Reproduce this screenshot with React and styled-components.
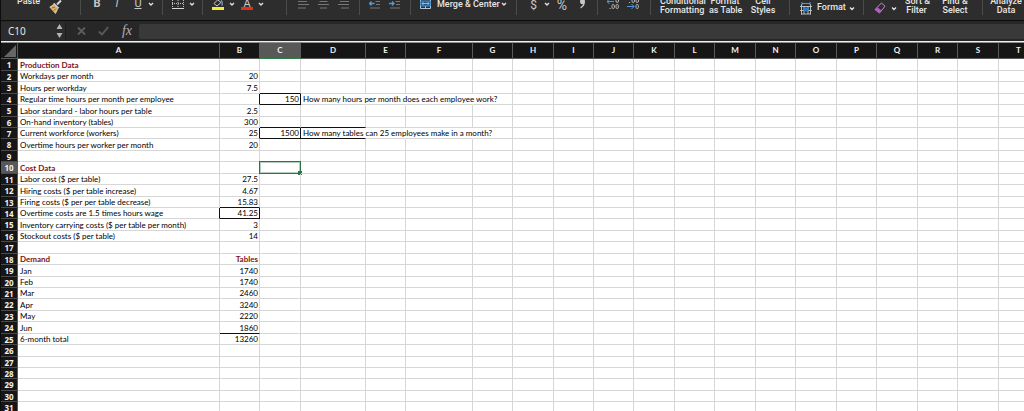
import React from 'react'
import styled, { createGlobalStyle } from 'styled-components'

const GlobalStyle = createGlobalStyle`
  * {
    box-sizing: border-box;
  }

  body {
    margin: 0;
    background: #fff;
  }

  button,
  input {
    margin: 0;
    padding: 0;
    border: 0;
    background: none;
    color: inherit;
    font: inherit;
  }
`

const Page = styled.div`
  display: flex;
  flex-direction: column;
  height: 100vh;
  overflow: hidden;
  border-left: 1px solid #0c0c0c;
  color: #e6e6e6;
  font-family: Roboto, "Liberation Sans", sans-serif;
`

const Ribbon = styled.div`
  flex: none;
  display: grid;
  grid-template-columns: 80px 82px 40px 84px 73px 51px 106px 81px 53px 139px 74px 119px 1fr;
  height: 21px;
  overflow: hidden;
  background: #2d2d2d;
  border-bottom: 1px solid #0d0d0d;
  font-size: 9px;
  font-weight: 500;
`

const Group = styled.div`
  display: flex;
  align-items: flex-end;
  gap: ${p => p.$gap || 8}px;
  height: 15px;
  padding-left: ${p => p.$left || 9}px;
  border-right: 1px solid #4b4b4b;

  &:last-child {
    border-right: 0;
  }
`

const Split = styled.div`
  display: flex;
  align-items: flex-end;
  gap: ${p => p.$gap || 5}px;
`

const Tool = styled.button`
  flex: none;
  display: block;
  width: ${p => p.$width || 12}px;
  height: 15px;

  svg {
    display: block;
  }
`

const Glyph = styled.button`
  flex: none;
  width: ${p => p.$width || 8}px;
  height: 15px;
  padding-bottom: ${p => (p.$low ? 5 : 7)}px;
  color: #c8c8c8;
  font-size: ${p => p.$size || 11}px;
  font-weight: ${p => (p.$bold ? 700 : 400)};
  font-style: ${p => (p.$italic ? 'italic' : 'normal')};
  text-decoration: ${p => (p.$underline ? 'underline' : 'none')};
  line-height: 8px;
`

const FontColor = styled.button`
  flex: none;
  width: 12px;
  height: 10px;
  margin-bottom: 5px;
  border-bottom: 3px solid #e0301e;
  color: #c8c8c8;
  font-size: 11px;
  font-weight: 400;
  line-height: 7px;
`

const TextButton = styled.button`
  flex: none;
  height: 15px;
  padding-bottom: ${p => (p.$low ? 2 : 7)}px;
  line-height: 8px;
  white-space: nowrap;
`

const TwoLine = styled.button`
  flex: none;
  width: ${p => p.$width}px;
  height: 18px;
  line-height: 9px;
  text-align: center;
  white-space: pre;
`

const FormulaBar = styled.div`
  flex: none;
  display: flex;
  align-items: center;
  height: 21px;
  background: #272727;
  border-bottom: 1px solid #eef0ef;
`

const NameBox = styled.div`
  display: flex;
  align-items: center;
  width: 65px;
  height: 18px;
  padding-left: 7px;
  background: #2c2c2c;
  border-right: 1px solid #1d1d1d;

  input {
    width: 48px;
    height: 14px;
    font-size: 10px;
    font-family: "Noto Sans", sans-serif;
  }
`

const BarActions = styled.div`
  display: flex;
  align-items: center;
  gap: 12px;
  padding: 0 6px 0 11px;
`

const FxButton = styled.button`
  width: 12px;
  color: #b0b0b0;
  font-family: "Liberation Serif", serif;
  font-size: 14px;
  font-style: italic;
  line-height: 14px;
`

const FormulaInput = styled.input`
  flex: 1;
  min-width: 0;
  height: 15px;
  padding: 0 4px;
  background: #393939;
  border-radius: 2px 0 0 2px;
  font-size: 10px;
`

const Sheet = styled.div`
  flex: 1;
  min-height: 0;
  overflow: hidden;
  background: #fff;
`

const Grid = styled.table`
  width: ${p => p.$width}px;
  table-layout: fixed;
  border-collapse: separate;
  border-spacing: 0;
  font-family: Lato, sans-serif;
  font-size: 8px;
  line-height: 9px;

  th,
  td {
    padding: 0;
    vertical-align: middle;
    white-space: nowrap;
  }

  tbody tr {
    height: 11px;
  }

  tbody tr:nth-child(7n + 1),
  tbody tr:nth-child(7n + 3),
  tbody tr:nth-child(7n + 5) {
    height: 12px;
  }
`

const ColHead = styled.th`
  height: 17px;
  background: ${p => (p.$active ? '#585858' : '#161616')};
  border-top: 1px solid #8b8f8d;
  border-right: 1px solid #5a5a5a;
  border-bottom: 1px solid ${p => (p.$active ? '#2f7d46' : '#5a5a5a')};
  color: #f2f2f2;
  font-weight: 700;

  svg {
    display: block;
    margin-left: 3px;
  }
`

const RowHead = styled.th`
  background: ${p => (p.$active ? '#585858' : '#161616')};
  border-right: 1px solid #5a5a5a;
  border-bottom: 1px solid #4a4a4a;
  color: #f2f2f2;
  font-family: "Noto Sans", sans-serif;
  font-weight: 700;
`

const lineColor = (edges, side) => (edges.includes(side) ? '#111' : '#d6d6d6')

const Cell = styled.td`
  position: relative;
  border-right: 1px solid ${p => (p.$spill ? 'transparent' : lineColor(p.$edges, 'r'))};
  border-bottom: 1px solid ${p => lineColor(p.$edges, 'b')};
  color: ${p => (p.$heading ? '#7d1416' : '#000')};
  font-weight: ${p => (p.$heading ? 700 : 400)};
  text-align: ${p => (p.$right ? 'right' : 'left')};

  && {
    padding: 1px 1px 0 2px;
  }
`

const Selection = styled.div`
  position: absolute;
  inset: -1px;
  border: 1px solid #2f7543;
  outline: 1px solid rgba(47, 117, 67, 0.35);
  outline-offset: -2px;

  &::after {
    content: "";
    position: absolute;
    right: -2px;
    bottom: -2px;
    width: 4px;
    height: 4px;
    background: #2f7543;
  }
`

const columns = [
  ['A', 202], ['B', 40], ['C', 41], ['D', 65], ['E', 40], ['F', 67], ['G', 40],
  ['H', 41], ['I', 40], ['J', 40], ['K', 41], ['L', 40], ['M', 41], ['N', 40],
  ['O', 41], ['P', 40], ['Q', 41], ['R', 40], ['S', 41], ['T', 40], ['U', 41],
  ['V', 40], ['W', 41], ['X', 40], ['Y', 41], ['Z', 40],
]
const rowHeadWidth = 17
const gridWidth = columns.reduce((sum, [, width]) => sum + width, rowHeadWidth)
const rows = Array.from({ length: 50 }, (_, i) => i + 1)

const cells = {
  A1: 'Production Data',
  A2: 'Workdays per month', B2: 20,
  A3: 'Hours per workday', B3: 7.5,
  A4: 'Regular time hours per month per employee', C4: 150, D4: 'How many hours per month does each employee work?',
  A5: 'Labor standard - labor hours per table', B5: 2.5,
  A6: 'On-hand inventory (tables)', B6: 300,
  A7: 'Current workforce (workers)', B7: 25, C7: 1500, D7: 'How many tables can 25 employees make in a month?',
  A8: 'Overtime hours per worker per month', B8: 20,
  A10: 'Cost Data',
  A11: 'Labor cost ($ per table)', B11: 27.5,
  A12: 'Hiring costs ($ per table increase)', B12: 4.67,
  A13: 'Firing costs ($ per per table decrease)', B13: 15.83,
  A14: 'Overtime costs are 1.5 times hours wage', B14: 41.25,
  A15: 'Inventory carrying costs ($ per table per month)', B15: 3,
  A16: 'Stockout costs ($ per table)', B16: 14,
  A18: 'Demand', B18: 'Tables',
  A19: 'Jan', B19: 1740,
  A20: 'Feb', B20: 1740,
  A21: 'Mar', B21: 2460,
  A22: 'Apr', B22: 3240,
  A23: 'May', B23: 2220,
  A24: 'Jun', B24: 1860,
  A25: '6-month total', B25: 13260,
}

const headings = ['A1', 'A10', 'A18', 'B18']
const spills = ['D4', 'E4', 'F4', 'D7', 'E7', 'F7']

// dark right (r) and bottom (b) lines
const edges = {
  C3: 'b', B4: 'r', C4: 'rb',
  C6: 'b', D6: 'b', B7: 'r', C7: 'rb', D7: 'b',
  B13: 'b', A14: 'r', B14: 'rb',
  B24: 'b',
}

const Chevron = ({ low }) => (
  <Tool $width={6} aria-label="More options">
    <svg width="6" height="15" viewBox="0 0 6 15" fill="none" stroke="#e0e0e0" strokeWidth="1.4">
      <path d={low ? 'M1 7.5l2 2 2-2' : 'M1 3l2 2 2-2'} />
    </svg>
  </Tool>
)

const Icon = ({ label, width = 12, children }) => (
  <Tool $width={width} aria-label={label}>
    <svg width={width} height="15" viewBox={`0 0 ${width} 15`} fill="none">{children}</svg>
  </Tool>
)

function Toolbar() {
  return (
    <Ribbon>
      <Group $left={16} $gap={10}>
        <TwoLine $width={22}>{'Paste\n '}</TwoLine>
        <Icon label="Format painter" width={13}>
          <path d="M12 .5L8 4.5" stroke="#d8d8d8" strokeWidth="2" />
          <path d="M4.5 3.5l5 5" stroke="#cfcfcf" strokeWidth="2" />
          <path d="M4 5L.8 7l5.700 6.500L8.500 9.500z" fill="#e6b25c" stroke="#f3ddb0" strokeWidth=".7" />
          <path d="M3 8l3-1M5 10.500l2-2" stroke="#7a5420" strokeWidth=".8" />
        </Icon>
      </Group>
      <Group $left={12} $gap={12}>
        <Glyph $bold>B</Glyph>
        <Glyph $italic>I</Glyph>
        <Split>
          <Glyph $width={10} $underline>U</Glyph>
          <Chevron />
        </Split>
      </Group>
      <Group>
        <Split>
          <Icon label="Borders">
            <path d="M.5 0v8M11.500 0v8M6 0v8M0 3.500h12" stroke="#bdbdbd" strokeDasharray="1 1" />
            <path d="M0 8.500h12" stroke="#d8d8d8" />
          </Icon>
          <Chevron />
        </Split>
      </Group>
      <Group $gap={6}>
        <Split>
          <Icon label="Fill color">
            <path d="M6 0l3 2.500-4 3.500L2 3.500 5.500 0" stroke="#c8c8c8" />
            <path d="M9 .500c1 .5 1.500 2.500 1 5" stroke="#6a9cc8" strokeWidth="1.400" />
            <path d="M0 7h12v3H0z" fill="#f4ea3a" />
          </Icon>
          <Chevron />
        </Split>
        <Split>
          <FontColor>A</FontColor>
          <Chevron />
        </Split>
      </Group>
      <Group $left={11}>
        <Icon label="Align left"><path d="M0 1.500h9M0 4.500h11M0 8h8" stroke="#777" /></Icon>
        <Icon label="Align center"><path d="M1.500 1.500h8M0 4.500h11M2 8h7" stroke="#777" /></Icon>
        <Icon label="Align right"><path d="M2 1.500h9M0 4.500h11M3 8h8" stroke="#777" /></Icon>
      </Group>
      <Group>
        <Icon label="Decrease indent">
          <path d="M6.500 1.500H11M7 4.500h4M1 8h10" stroke="#777" />
          <path d="M.5 3.500h5M2.500 1.500l-2 2 2 2" stroke="#4a9be0" strokeWidth="1.300" />
        </Icon>
        <Icon label="Increase indent">
          <path d="M6.500 1.500H11M7 4.500h4M1 8h10" stroke="#777" />
          <path d="M0 3.500h5M3 1.500l2 2-2 2" stroke="#4a9be0" strokeWidth="1.300" />
        </Icon>
      </Group>
      <Group>
        <Split>
          <Icon label="Merge">
            <path d="M.5 0v8.500h10V0M5.500 6v2.500" stroke="#b8c4cf" />
            <path d="M.5 1h10v5H.5z" fill="#24527c" stroke="#4a9be0" />
            <path d="M2 3.500h7M3.500 2l-1.500 1.500 1.500 1.500M7.500 2L9 3.500 7.500 5" stroke="#7cc0f5" />
          </Icon>
          <Split $gap={1}>
            <TextButton>Merge &amp; Center</TextButton>
            <Chevron />
          </Split>
        </Split>
      </Group>
      <Group $left={11} $gap={6}>
        <Split>
          <Glyph $width={11} $size={12} $low>$</Glyph>
          <Chevron />
        </Split>
        <Glyph $width={12} $size={14} $low>%</Glyph>
        <Icon label="Comma style" width={16}>
          <path d="M6 1.500a2.400 2.400 0 0 1 5 0c0 3.500-1.500 5.500-4.500 7V7C8 6.200 8.800 5.200 8.800 4 7 4.500 6 3.200 6 1.500z" fill="#c8c8c8" />
        </Icon>
      </Group>
      <Group>
        <Icon label="Increase decimal">
          <path d="M0 1.500h7M2.500-1L0 1.500 2.500 4" stroke="#4a9be0" />
          <path d="M9 0v1q0 1.500 1.200 1.500T11.500 1V0" stroke="#b4b4b4" />
          <rect x="5" y="4.500" width="2.400" height="4" rx="1.200" stroke="#b4b4b4" />
          <rect x="9" y="4.500" width="2.400" height="4" rx="1.200" stroke="#b4b4b4" />
          <path d="M2.500 8.500h1.200" stroke="#b4b4b4" />
        </Icon>
        <Icon label="Decrease decimal">
          <path d="M0 6.500h7M4.500 4L7 6.500 4.500 9" stroke="#4a9be0" />
          <path d="M5 0v1q0 1.500 1.200 1.500T7.500 1V0M9 0v1q0 1.500 1.200 1.500T11.500 1V0M2 2.500h1.200" stroke="#b4b4b4" />
          <rect x="9" y="4.500" width="2.400" height="4" rx="1.200" stroke="#b4b4b4" />
        </Icon>
      </Group>
      <Group $gap={7}>
        <TwoLine $width={42}>{'Conditional\nFormatting'}</TwoLine>
        <TwoLine $width={32}>{'Format\nas Table'}</TwoLine>
        <TwoLine $width={30}>{'Cell\nStyles'}</TwoLine>
      </Group>
      <Group $left={10}>
        <Split>
          <Icon label="Cells">
            <path d="M1.500 4v10.500M10.500 4v10.500M0 6.500h12M0 10.500h12M1 14h10M4 6v8M8 6v8" stroke="#c8c8c8" strokeWidth=".9" />
            <path d="M3.500 7.500h5v4h-5z" fill="#2a7cc8" />
            <path d="M2 3.500h8M2 2v3M10 2v3" stroke="#4a9be0" />
          </Icon>
          <Split $gap={3}>
            <TextButton $low>Format</TextButton>
            <Chevron low />
          </Split>
        </Split>
      </Group>
      <Group $left={10}>
        <Split>
          <Icon label="Clear">
            <path d="M7.500 3l3.500 3.200-5.500 6.800L1 9.500z" stroke="#c58ad0" />
            <path d="M3.500 7.300l4 3.200-2 2.500L1 9.500z" fill="#b05cc0" />
          </Icon>
          <Chevron low />
        </Split>
        <TwoLine $width={23}>{'Sort &\nFilter'}</TwoLine>
        <TwoLine $width={38}>{'Find &\nSelect'}</TwoLine>
      </Group>
      <Group $left={5}>
        <TwoLine $width={36}>{'Analyze\nData'}</TwoLine>
      </Group>
    </Ribbon>
  )
}

function Formula() {
  return (
    <FormulaBar>
      <NameBox>
        <input aria-label="Name box" defaultValue="C10" />
        <svg width="7" height="14" viewBox="0 0 7 14" fill="#b4b4b4">
          <path d="M3.500 0L6.500 5h-6zM3.500 14L.5 9h6z" />
        </svg>
      </NameBox>
      <BarActions>
        <button aria-label="Cancel">
          <svg width="9" height="10" viewBox="0 0 9 10" fill="none" stroke="#5c5c5c" strokeWidth="1.800" display="block">
            <path d="M1 1.500l7 7M8 1.500l-7 7" />
          </svg>
        </button>
        <button aria-label="Enter">
          <svg width="11" height="10" viewBox="0 0 11 10" fill="none" stroke="#5c5c5c" strokeWidth="1.800" display="block">
            <path d="M.8 5.500L4 8.500 10.200 1" />
          </svg>
        </button>
        <FxButton>fx</FxButton>
      </BarActions>
      <FormulaInput aria-label="Formula" />
    </FormulaBar>
  )
}

export default function App() {
  return (
    <>
      <GlobalStyle />
      <Page>
        <Toolbar />
        <Formula />
        <Sheet>
          <Grid $width={gridWidth}>
            <colgroup>
              <col width={rowHeadWidth} />
              {columns.map(([name, width]) => <col key={name} width={width} />)}
            </colgroup>
            <thead>
              <tr>
                <ColHead aria-label="Select all">
                  <svg width="12" height="12" viewBox="0 0 12 12" fill="#666"><path d="M12 0v12H0z" /></svg>
                </ColHead>
                {columns.map(([name]) => <ColHead key={name} $active={name === 'C'}>{name}</ColHead>)}
              </tr>
            </thead>
            <tbody>
              {rows.map(row => (
                <tr key={row}>
                  <RowHead $active={row === 10}>{row}</RowHead>
                  {columns.map(([name]) => {
                    const id = name + row
                    return (
                      <Cell
                        key={id}
                        $edges={edges[id] || ''}
                        $spill={spills.includes(id)}
                        $heading={headings.includes(id)}
                        $right={name === 'B' || name === 'C'}
                      >
                        {cells[id]}
                        {id === 'C10' && <Selection />}
                      </Cell>
                    )
                  })}
                </tr>
              ))}
            </tbody>
          </Grid>
        </Sheet>
      </Page>
    </>
  )
}
